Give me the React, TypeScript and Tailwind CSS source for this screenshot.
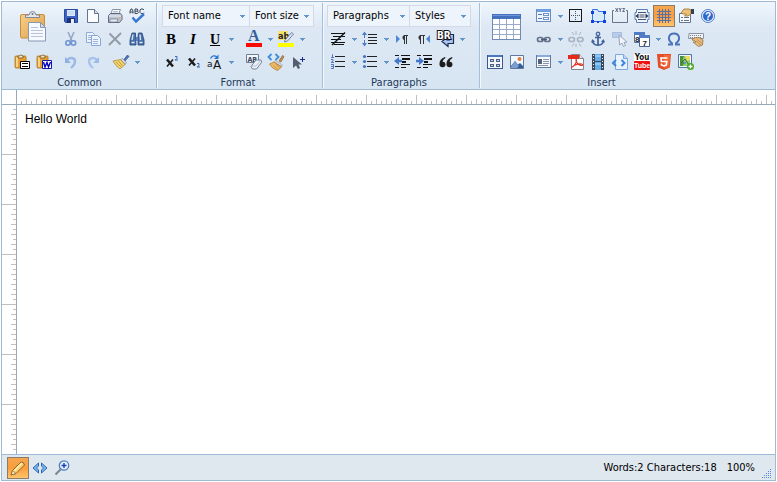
import React from "react";

type Kids = { children: React.ReactNode };

function Ico({ children, crisp }: Kids & { crisp?: boolean }) {
  return (
    <svg width="16" height="16" viewBox="0 0 16 16" fill="none" aria-hidden="true" className="overflow-visible" shapeRendering={crisp ? "crispEdges" : "auto"}>
      {children}
    </svg>
  );
}

function Caret() {
  return (
    <svg width="5" height="3" viewBox="0 0 5 3" shapeRendering="crispEdges" aria-hidden="true">
      <path d="M0 0h5v1H0zM1 1h3v1H1zM2 2h1v1H2z" fill="#6596cb" />
    </svg>
  );
}

function Btn({ label, children, active }: Kids & { label: string; active?: boolean }) {
  return (
    <button
      type="button"
      title={label}
      aria-label={label}
      aria-pressed={active}
      className={
        active
          ? "flex h-[22px] w-[22px] items-center justify-center border border-[#8b7d6b] bg-linear-to-b from-[#f5a64e] via-[#fb9c3c] to-[#ffc66b]"
          : "flex h-[22px] w-[22px] items-center justify-center"
      }
    >
      {children}
    </button>
  );
}

function More({ label }: { label: string }) {
  return (
    <button type="button" aria-label={label + " options"} className="flex h-[22px] w-2.5 items-center justify-center">
      <Caret />
    </button>
  );
}

function Row({ children }: Kids) {
  return <div className="flex h-[23px] items-start">{children}</div>;
}

function Group({ label, className, children }: Kids & { label: string; className: string }) {
  return (
    <section aria-label={label} className={"flex flex-col pt-[3px] " + className}>
      {children}
      <h2 className="pt-[3px] text-center text-[11px] leading-3 text-[#1e395b]">{label}</h2>
    </section>
  );
}

function Divider() {
  return <div className="my-px w-px bg-[#a5bfda] shadow-[1px_0_0_#f3f8fd]" />;
}

function Pick({ label, className }: { label: string; className: string }) {
  return (
    <div className={"relative h-[22px] " + className}>
      <select
        aria-label={label}
        className="h-full w-full appearance-none border border-[#d5d9e6] bg-[#edf4fc] pl-[5px] text-[11px] text-black outline-none"
      >
        <option>{label}</option>
      </select>
      <span className="pointer-events-none absolute inset-y-0 right-[5px] flex items-center">
        <Caret />
      </span>
    </div>
  );
}

/* ---------- Common ---------- */

const PasteLarge = () => (
  <svg width="28" height="32" viewBox="0 0 28 32" aria-hidden="true">
    <defs>
      <linearGradient id="board" x1="0" y1="0" x2="1" y2="1">
        <stop offset="0" stopColor="#f6cf88" />
        <stop offset="1" stopColor="#dfa04a" />
      </linearGradient>
    </defs>
    <rect x="1.5" y="3.5" width="24" height="23.500" rx="1.500" fill="url(#board)" stroke="#c98f3f" />
    <path d="M6.500 6.500v-2.500h3.500q.5-3.500 3.500-3.500t3.500 3.500h3.500v2.500z" fill="#e4e8ee" stroke="#7d8796" />
    <circle cx="13.500" cy="3" r="1" fill="#68717e" />
    <path d="M9.500 11.500h12l5 5v13.500h-17z" fill="#f6f9ff" stroke="#8996b5" />
    <path d="M21.500 11.500v5h5z" fill="#cbd8ee" stroke="#8996b5" />
    <path d="M12 16.500h7M12 19.500h12M12 22.500h12M12 25.500h12" stroke="#b9c4d8" />
  </svg>
);

const Board = () => (
  <>
    <rect x="1" y="2" width="11" height="12" rx="1" fill="#e7a036" stroke="#a86f1d" strokeWidth=".8" />
    <path d="M2 3h2v10H2z" fill="#f9d287" />
    <path d="M4 4V2h1.500Q6.500 0 8 1.500L9 2v2z" fill="#f3e6c4" stroke="#73511d" strokeWidth=".8" />
  </>
);
const PastePlain = () => (
  <Ico>
    <Board />
    <path d="M6.500 7.500h9v7h-9z" fill="#fff" stroke="#000" />
    <path d="M8 9.500h6M8 12.500h6" stroke="#000" />
  </Ico>
);
const PasteWord = () => (
  <Ico>
    <Board />
    <path d="M6.500 6.500h9v8h-9z" fill="#fff" stroke="#1717a8" />
    <path d="M7.500 8l1.500 5 2-4.500 1.500 4.500 2-5" stroke="#0000b8" strokeWidth="1.400" />
  </Ico>
);
const Save = () => (
  <Ico>
    <path d="M1.500 1.500h13v13h-12l-1-1z" fill="#3d62c4" stroke="#274a9e" />
    <path d="M4 2h8v6H4z" fill="#dce8fb" />
    <path d="M5 4h6M5 6h6" stroke="#a9c3ee" strokeWidth=".7" />
    <path d="M4 10h8v5H4z" fill="#1f316f" />
    <path d="M8 11h3v4H8z" fill="#e7eefb" />
  </Ico>
);
const NewDoc = () => (
  <Ico>
    <path d="M2.500 1.500h7l4 4v9h-11z" fill="#fbfdff" stroke="#66758f" />
    <path d="M9.500 1.500v4h4" fill="#d5e1f2" stroke="#66758f" />
  </Ico>
);
const Print = () => (
  <Ico>
    <path d="M5.500 1.500h8l-2.500 6H3z" fill="#fff" stroke="#8490a3" />
    <path d="M6 3.500h5M5.500 5h5" stroke="#9aa7ba" strokeWidth=".7" />
    <path d="M1.500 7.500l2-2h10l1.500 2v4l-2.500 3h-11z" fill="#bdc5d3" stroke="#5f6b80" />
    <path d="M2 8h12" stroke="#eef2f8" />
    <path d="M3 11h8l-1 3H3z" fill="#e8edf5" stroke="#737e91" strokeWidth=".8" />
    <circle cx="12.500" cy="10" r=".8" fill="#e2a938" />
  </Ico>
);
const Spell = () => (
  <Ico>
    <path d="M1 5.500V3l1-2h1l1 2v2.500M1 4h3M6 1v4.500h2.500l.8-1-.8-1.500.5-1-.8-1zM6 3.200h2.500M15 2l-1-1h-2l-1 1v2.500l1 1h2l1-1" stroke="#3c4658" />
    <path d="M3.500 9.500l3.500 4 8-7.500" stroke="#3976d2" strokeWidth="2.400" />
  </Ico>
);
const Cut = () => (
  <Ico>
    <path d="M5 1l4 9M11 1L7 10" stroke="#93a6c5" strokeWidth="1.500" />
    <circle cx="5" cy="12" r="2.200" stroke="#6f93d3" strokeWidth="1.600" />
    <circle cx="10.500" cy="12" r="2.200" stroke="#6f93d3" strokeWidth="1.600" />
  </Ico>
);
const Copy = () => (
  <Ico>
    <path d="M1.500 1.500h6l2 2v8h-8z" fill="#edf4fd" stroke="#8ca9d8" />
    <path d="M3 4.500h4M3 6.500h4M3 8.500h4" stroke="#9bb5df" />
    <path d="M6.500 4.500h6l3 3v7h-9z" fill="#edf4fd" stroke="#86a5d8" />
    <path d="M8 8.500h5M8 10.500h5M8 12.500h5" stroke="#9bb5df" />
  </Ico>
);
const Delete = () => (
  <Ico>
    <path d="M2.500 2.500l11 11M14 2L2 14" stroke="#9199a5" strokeWidth="1.800" />
  </Ico>
);
const Find = () => (
  <Ico>
    <path d="M3 2h3.500v3L7 14H1V9zM9.500 2H13l2 7v5H9V5z" fill="#4a72ad" stroke="#25457a" strokeWidth=".8" />
    <path d="M7 6h2v4H7z" fill="#5c82ba" />
    <path d="M4 3.500L3 9M11 3.500l.5 5.500" stroke="#dbe8f8" strokeWidth="1.300" />
    <path d="M2.500 11.500h3M10.500 11.500h3" stroke="#dbe8f8" strokeWidth="1.600" />
  </Ico>
);
const Undo = () => (
  <Ico>
    <path d="M4 6.500C6 3 12 3 12 7.500c0 3-2 4.500-4 6.500" stroke="#9bb9e8" strokeWidth="2.400" />
    <path d="M2 3v6h6z" fill="#8fb0e4" />
  </Ico>
);
const Redo = () => (
  <Ico>
    <path d="M12 6.500C10 3 4 3 4 7.500c0 3 2 4.500 4 6.500" stroke="#a9c4ec" strokeWidth="2.400" />
    <path d="M14 3v6H8z" fill="#9dbbe8" />
  </Ico>
);
const Brush = () => (
  <Ico>
    <path d="M10.500 6L14.500 1l1.500 1.500-4.500 5z" fill="#4f74bd" stroke="#2f4f8d" strokeWidth=".7" />
    <path d="M7.500 5.500l2-1 4 4-1.500 2z" fill="#d0d5de" stroke="#7f8794" strokeWidth=".7" />
    <path d="M7.500 5.500l4.500 5L7 15Q2.500 12 0 7z" fill="#f1d36f" stroke="#a8812f" strokeWidth=".7" />
    <path d="M3 8l5 5M5.500 7l4 5" stroke="#bd9036" strokeWidth=".8" />
  </Ico>
);

/* ---------- Format ---------- */

const serif = "font-[Liberation_Serif,serif]";

const SuperScript = () => (
  <Ico>
    <path d="M4 5.500l6 7" stroke="#1c1c1c" strokeWidth="2.600" />
    <path d="M10 5.500l-6 7" stroke="#1c1c1c" strokeWidth="1.600" />
    <path d="M12 2.500h2v2l-2 1.500h3" stroke="#3d67b5" />
  </Ico>
);
const SubScript = () => (
  <Ico>
    <path d="M4 4.500l6 7" stroke="#1c1c1c" strokeWidth="2.600" />
    <path d="M10 4.500l-6 7" stroke="#1c1c1c" strokeWidth="1.600" />
    <path d="M12 9.500h2v2l-2 1.500h3" stroke="#3d67b5" />
  </Ico>
);
const ChangeCase = () => (
  <Ico>
    <path d="M3.500 4.500Q6 0 10 3" stroke="#2d77cc" strokeWidth="1.300" />
    <path d="M11.500.5v4.500H7z" fill="#2d77cc" />
    <text x="0" y="13" fontSize="9" fill="#111" className="font-[DejaVu_Sans,sans-serif]">a</text>
    <text x="6" y="15" fontSize="12" fill="#111" className="font-[DejaVu_Sans,sans-serif]">A</text>
  </Ico>
);
const FontColor = () => (
  <Ico>
    <text x="2" y="10" fontSize="16" fontWeight="700" fill="#335e9e" className={serif}>A</text>
    <path d="M0 12h16v4H0z" fill="#fa0a00" />
  </Ico>
);
const Highlight = () => (
  <Ico>
    <path d="M0 0h10v9H0z" fill="#f6e272" />
    <text x="0" y="8" fontSize="9" fontWeight="700" fill="#222" className="font-[DejaVu_Sans_Condensed,sans-serif]">ab</text>
    <path d="M7 9l6.500-7.500 2 1.500L9.500 10l-3 1z" fill="#d9e4f5" stroke="#5d6f8b" strokeWidth=".8" />
    <path d="M0 12h16v4H0z" fill="#ff0" />
  </Ico>
);
const RemoveFormat = () => (
  <Ico>
    <path d="M.5.5h12v8h-12z" fill="#f2f6fc" stroke="#707e94" />
    <text x="1.500" y="7.500" fontSize="7" fontWeight="700" fill="#31445f" className="font-[DejaVu_Sans_Condensed,sans-serif]">AB</text>
    <path d="M5 12.500l5-6.500h5l.5 2.500-5 6.500H6.500z" fill="#eef2f8" stroke="#75829a" />
    <path d="M5 12h5l5-6" stroke="#a6b1c4" strokeWidth=".8" />
  </Ico>
);
const CleanCode = () => (
  <svg width="18" height="18" viewBox="0 0 18 18" fill="none" aria-hidden="true">
    <path d="M4.500 1L1.500 4l3 3M8.500 1l3 3-3 3" stroke="#3e8ddb" strokeWidth="1.800" />
    <path d="M12 8l3.500-5.500 1.500 1L14 9z" fill="#c79254" stroke="#8a612f" strokeWidth=".7" />
    <path d="M8.500 7.500l7 4.500-1 1.500-7.500-4z" fill="#d7dbe2" stroke="#858c99" strokeWidth=".6" />
    <path d="M7 9l7.500 5-4 3.500Q5 15.500 2.500 11z" fill="#efbd6c" stroke="#b1772d" strokeWidth=".8" />
    <path d="M6 11.500l4.500 5M8.500 10.500l4 4.500" stroke="#bf8436" strokeWidth=".7" />
  </svg>
);
const SelectPlus = () => (
  <Ico>
    <path d="M3 3v11l3-2.500L8 15l2-1-1.500-3.500H12z" fill="#535f70" />
    <path d="M10 5.500h5M12.500 3v5" stroke="#1b2b8b" />
  </Ico>
);

/* ---------- Paragraphs ---------- */

const NoJustify = () => (
  <Ico>
    <path d="M1 2.500h14M3 5.500h12M1 8.500h10M1 11.500h14M4 13.500h10" stroke="#151515" strokeWidth="1.200" />
    <path d="M2 14L15 1.500" stroke="#151515" strokeWidth="1.500" />
  </Ico>
);
const LineHeight = () => (
  <Ico>
    <path d="M2.500 3v10" stroke="#4c7cc6" strokeDasharray="4 2" />
    <path d="M0 4h5L2.500.5zM0 12h5l-2.500 3.500z" fill="#4c7cc6" />
    <path d="M6 3.500h9M6 6.500h9M6 9.500h9M6 12.500h9" stroke="#222" />
  </Ico>
);
const Pilcrow = ({ flip }: { flip?: boolean }) => (
  <Ico>
    <path d={flip ? "M14 4v8l-4-4z" : "M2 4v8l4-4z"} fill="#4d87d6" />
    <path d={flip ? "M4.500 5v8M7.500 5v8M9 4.500H4" : "M10.500 5v8M12.500 5v8M14 4.500h-4"} stroke="#333" />
    <path d={flip ? "M5 4a2.500 2.500 0 000 5z" : "M11 4a2.500 2.500 0 000 5z"} fill="#333" />
  </Ico>
);
const LineBreak = () => (
  <svg width="18" height="18" viewBox="0 0 18 18" fill="none" aria-hidden="true" className="overflow-visible">
    <path d="M12.500 4.500h4v9h-5.500v3L5 11.500l5-4v2.500h2.500z" fill="#a9c7f0" stroke="#1e2c54" strokeWidth="1.200" />
    <text x="0" y="9" fontSize="10" fontWeight="700" fill="#fff" stroke="#14141c" strokeWidth="2" paintOrder="stroke" className="font-[DejaVu_Sans_Condensed,sans-serif]">BR</text>
  </svg>
);
const Numbered = () => (
  <Ico>
    <path d="M2 .5h.5v3M1 3.500h3M1 5.500h2v1.500l-2 1.500h3M1 10.500h2.500v4H1M1 12.500h2" stroke="#5479bb" />
    <path d="M5 2.500h10M5 7.500h10M5 12.500h10" stroke="#222" />
  </Ico>
);
const Bullets = () => (
  <Ico>
    <circle cx="2.500" cy="2.500" r="1.600" fill="#4674bd" />
    <circle cx="2.500" cy="7.500" r="1.600" fill="#4674bd" />
    <circle cx="2.500" cy="12.500" r="1.600" fill="#4674bd" />
    <path d="M5 2.500h10M5 7.500h10M5 12.500h10" stroke="#222" />
  </Ico>
);
const Indent = ({ more }: { more?: boolean }) => (
  <Ico>
    <path d="M1 1.500h4M7 1.500h9M7 10.500h9M1 13.500h4M7 13.500h5" stroke="#151515" />
    <path d="M8 5h8M8 8h4" stroke="#151515" strokeWidth="1.800" />
    <path d={more ? "M3 3l5 4-5 4V8.200H0V5.800h3z" : "M5 3L0 7l5 4V8.200h3V5.800H5z"} fill="#4478ca" />
  </Ico>
);
const Quote = () => (
  <Ico>
    <path d="M7 3Q1 5 1.500 10.500a3 3 0 106-.5Q7 7.500 4.500 7.800 5 5 7.500 4zM14 3Q8 5 8.500 10.500a3 3 0 106-.5Q14 7.500 11.500 7.800 12 5 14.500 4z" fill="#1d1d1d" />
  </Ico>
);

/* ---------- Insert ---------- */

const TableLarge = () => (
  <svg width="29" height="26" viewBox="0 0 29 26" shapeRendering="crispEdges" aria-hidden="true">
    <path d="M.5.5h28v25H.5z" fill="#fff" stroke="#7189b5" />
    <path d="M0 0h29v5H0z" fill="#4470bd" />
    <path d="M1 1h27v1H1z" fill="#6d95d8" />
    <path d="M1 10.500h27M1 15.500h27M1 20.500h27M7.500 5v20M14.500 5v20M21.500 5v20" stroke="#9aabc8" />
  </svg>
);
const Templates = () => (
  <Ico crisp>
    <path d="M.5 1.500h15v13H.5z" fill="#f3f7fd" stroke="#3b598f" />
    <path d="M1 1h14v2H1z" fill="#4b78bd" />
    <path d="M3 5h4v3H3zM9 5h4v3H9zM3 10h4v3H3zM9 10h4v3H9z" fill="#4c6184" />
    <path d="M4 6h2v1H4zM10 6h2v1h-2zM4 11h2v1H4zM10 11h2v1h-2z" fill="#bcd3f2" />
  </Ico>
);
const Picture = () => (
  <Ico>
    <path d="M1.500 1.500h13v13h-13z" fill="#f3f8ff" stroke="#61799f" />
    <path d="M2 12l4-5 3 3.500 2-1.500 3 3v2H2z" fill="#355d96" />
    <path d="M6 7l4 5-2 2H2v-1z" fill="#7ba0cf" />
    <circle cx="10.500" cy="5" r="2" fill="#e47b3d" />
  </Ico>
);
const Form = () => (
  <Ico crisp>
    <path d="M.5 1.500h14v12H.5z" fill="#eef5fe" stroke="#6c8cbd" />
    <path d="M1 1h13v3H1z" fill="#71a0df" />
    <path d="M2 6h4v1H2zM2 10h4v1H2z" fill="#587bae" />
    <path d="M7.500 5.500h5v2h-5zM7.500 9.500h5v2h-5z" fill="#fff" stroke="#6c94cf" />
  </Ico>
);
const BoxDotted = () => (
  <Ico crisp>
    <path d="M1.500 1.500h12v12h-12z" stroke="#15181d" />
    <path d="M7.500 3v9M3 7.500h9" stroke="#4b535f" strokeDasharray="1 1" />
  </Ico>
);
const Layer = () => (
  <Ico>
    <path d="M2.500 4.500V1.500h5l1 2h6v10h-12z" fill="#d7e9fd" stroke="#3972e3" />
    <path d="M1 3h3v3H1zM13 3h3v3h-3zM1 12h3v3H1zM13 12h3v3h-3zM7 13h2v2H7z" fill="#123fe2" />
  </Ico>
);
const FieldSet = () => (
  <Ico>
    <path d="M2 2.500H.5v12h15v-12H14" stroke="#677386" />
    <path d="M3.500 0l2.500 4M6 0L3.500 4M7 0l1.200 2 1.200-2M8.200 2v2M10.500.5h2.200l-2 3h2.200" stroke="#536176" strokeWidth=".9" />
  </Ico>
);
const PageBreak = () => (
  <Ico>
    <path d="M2.500 1.500h11v3h1.500v7h-1.500v3h-11v-3H1v-7h1.500z" fill="#eef4fc" stroke="#6080b5" />
    <path d="M4 4.500h8M4 11.500h8M5.500 7h5M5.500 9h5" stroke="#4a5569" />
    <path d="M4.500 5.500v5L1.500 8zM11.500 5.500v5l3-2.500z" fill="#243352" />
  </Ico>
);
const GridIcon = () => (
  <Ico crisp>
    <path d="M1 3.500h14M1 6.500h14M1 9.500h14M1 12.500h14M3.500 1v14M6.500 1v14M9.500 1v14M12.500 1v14" stroke="#5570a4" />
  </Ico>
);
const Properties = () => (
  <Ico>
    <path d="M1.500 5.500h11v9h-11z" fill="#f7f9fc" stroke="#657791" />
    <path d="M3 9.500h2M3 12.500h2M6 9.500h5M6 12.500h5" stroke="#66758c" />
    <path d="M3 5l3-4h5l2 1v4l-3 2H6.500l2-2H5z" fill="#edc078" stroke="#9c6e2e" strokeWidth=".8" />
    <path d="M13 1h3v5h-3z" fill="#334255" />
  </Ico>
);
const Help = () => (
  <Ico>
    <circle cx="8" cy="8" r="6.500" fill="#e6effc" stroke="#5581cb" />
    <circle cx="8" cy="8" r="5" fill="#2f68c8" />
    <text x="5" y="12" fontSize="10" fontWeight="700" fill="#fff" className="font-[Liberation_Sans,sans-serif]">?</text>
  </Ico>
);
const Chain = ({ muted }: { muted?: boolean }) => (
  <Ico>
    <rect x={muted ? 1 : 1.5} y="6.500" width="5.500" height="4" rx="2" stroke={muted ? "#a9b3c3" : "#667389"} strokeWidth="1.700" />
    <rect x={muted ? 9.5 : 8.5} y="6.500" width="5.500" height="4" rx="2" stroke={muted ? "#a9b3c3" : "#667389"} strokeWidth="1.700" />
    {muted ? (
      <path d="M4 1l2 3M8 0v4M13 1l-2 3M4 15.500l2-3M8 16v-3M13 15.500l-2-3" stroke="#aab2bf" />
    ) : (
      <path d="M5 8.500h6" stroke="#4f5e77" strokeWidth="1.500" />
    )}
  </Ico>
);
const Anchor = () => (
  <Ico>
    <circle cx="8" cy="3" r="1.700" stroke="#4c6fa5" strokeWidth="1.400" />
    <path d="M8 4.500v10M5 6.500h6M2.500 9.500Q3 14 8 14.200 13 14 13.500 9.500" stroke="#3e6298" strokeWidth="1.700" />
    <path d="M1 11.500L2.500 8 5 11zM15 11.500L13.500 8 11 11z" fill="#3e6298" />
  </Ico>
);
const ButtonCursor = () => (
  <Ico>
    <path d="M.5 1.500h9v5h-9z" fill="#b9cdeb" stroke="#a7bddf" />
    <path d="M7 4l.5 10 2.500-2 1.500 3.500 2-1-1.500-3 3-.5z" fill="#f1f5fb" stroke="#98a6bb" />
  </Ico>
);
const DateTime = () => (
  <Ico>
    <path d="M.5 1.500h10v10H.5z" fill="#fff" stroke="#5373b0" />
    <path d="M0 1h11v3H0z" fill="#4f7cc4" />
    <path d="M5.500 4.500h10v11h-10z" fill="#fff" stroke="#4a6594" />
    <path d="M5 4h11v3H5z" fill="#527ec5" />
    <text x="1" y="11" fontSize="8" fontWeight="700" fill="#222" className="font-[Liberation_Sans,sans-serif]">8</text>
    <text x="8.500" y="14.500" fontSize="8" fontWeight="700" fill="#222" className="font-[Liberation_Sans,sans-serif]">7</text>
  </Ico>
);
const Omega = () => (
  <Ico>
    <path d="M2 13.500h4v-1.300C1 8.500 2.500 2.500 8 2.500s7 6 2 9.700v1.300h4" stroke="#4c74bb" strokeWidth="2" />
  </Ico>
);
const Keyboard = () => (
  <Ico>
    <path d="M1 2.500h14.500v5H.5z" fill="#eef1f5" stroke="#8c94a1" />
    <path d="M2 4.500h12M2 6.500h12" stroke="#7b8490" strokeDasharray="1 1" />
    <path d="M4 9l2-2 5-.5 4 2.500-.5 5-4 1.500L5 11h3L6.500 9.500z" fill="#e9bd7d" stroke="#9d713a" strokeWidth=".8" />
    <path d="M8 10l5 4M9 8.500l5 3.500" stroke="#b3854b" strokeWidth=".8" />
  </Ico>
);
const Snippet = () => (
  <Ico crisp>
    <path d="M.5 1.500h14v12H.5z" fill="#f7faff" stroke="#62799f" />
    <path d="M1 1h13v2H1z" fill="#8babd9" />
    <path d="M2 5h4v5H2z" fill="#53637a" />
    <path d="M7 5.500h6M7 7.500h6M7 9.500h6M2 11.500h10" stroke="#8794a8" />
  </Ico>
);
const Pdf = () => (
  <Ico>
    <path d="M3.500.5h8l4 4v11h-12z" fill="#fbfbfc" stroke="#81848a" />
    <path d="M11.500.5v4h4" fill="#dfe3e9" stroke="#81848a" />
    <path d="M0 1h11v4H0z" fill="#e62918" />
    <path d="M3.500 13.500Q8 11 8.500 6.500C8.500 4 6.500 6.500 10 10q3 2 4.500 1.200.5-1.700-4-1.200-4.500.7-7 3.500" stroke="#e52a1d" strokeWidth="1.100" />
  </Ico>
);
const Film = () => (
  <Ico crisp>
    <path d="M2 0h12v16H2z" fill="#3c4759" />
    <path d="M5 0h6v7H5zM5 8h6v8H5z" fill="#64ade9" />
    <path d="M5 1h6v2H5zM5 9h6v2H5z" fill="#8cc8f5" />
    <path d="M3.500 1v15M12.500 1v15" stroke="#e9f1fa" strokeDasharray="1 2" />
  </Ico>
);
const CodeDoc = () => (
  <Ico>
    <path d="M3.500.5h8l4 4v11h-12z" fill="#e8f3ff" stroke="#7ca8de" />
    <path d="M11.500.5v4h4" fill="#bedafa" stroke="#7ca8de" />
    <path d="M4 6L1 9l3 3M9.500 6l3 3-3 3" stroke="#3987d7" strokeWidth="2" />
  </Ico>
);
const YouTube = () => (
  <Ico>
    <path d="M0 0h16v7H0z" fill="#fff" />
    <text x="8" y="6" textAnchor="middle" fontSize="8" fontWeight="700" fill="#111" className="font-[DejaVu_Sans_Condensed,sans-serif]">You</text>
    <rect y="7" width="16" height="9" rx="1" fill="#ef1212" />
    <text x="8" y="14" textAnchor="middle" fontSize="7" fontWeight="700" fill="#fff" className="font-[Liberation_Sans,sans-serif]">Tube</text>
  </Ico>
);
const Html5 = () => (
  <Ico>
    <path d="M1 0h14l-1.200 13.500L8 16l-5.800-2.500z" fill="#e44d26" />
    <path d="M8 1h6l-1 11.500L8 14.500z" fill="#f16a3a" />
    <path d="M11.500 4H5l.3 3.500h5.500l-.5 3.500L8 12l-2.500-1-.2-1.500" stroke="#fff" strokeWidth="1.600" />
  </Ico>
);
const MapAdd = () => (
  <Ico>
    <path d="M.5.5h13v13H.5z" fill="#8fd06b" stroke="#4f78a8" />
    <path d="M1.500 1.500h11v11h-11z" stroke="#f4f8fc" />
    <path d="M2 2h4l-1.500 4 2 3-2 3H2z" fill="#4f8f3c" />
    <path d="M7 2h5v4L9 7z" fill="#f1d86b" />
    <path d="M3 9l4-4 4 6" stroke="#376d36" />
    <path d="M6 8h2v2H6z" fill="#5b97dc" />
    <circle cx="12.500" cy="12.500" r="3.500" fill="#48a62a" />
    <path d="M10.500 12.500h4M12.500 10.500v4" stroke="#fff" strokeWidth="1.300" />
  </Ico>
);

/* ---------- Status bar ---------- */

const Pencil = () => (
  <Ico>
    <path d="M1 15l1.500-4.500L11 2q3 0 3.500 3L6 13.500z" fill="#f9cf6d" stroke="#8f6225" />
    <path d="M4 11l8-8" stroke="#fff3b7" strokeWidth="1.500" />
    <path d="M2.500 10.500l3.500 3L1 15z" fill="#f8e5c2" stroke="#8f6225" strokeWidth=".7" />
  </Ico>
);
const CodeView = () => (
  <Ico>
    <path d="M6.500 3L1 8l5.500 5v-3L4.500 8l2-2zM9.500 3L15 8l-5.500 5v-3l2-2-2-2z" fill="#7db8f0" stroke="#2a67b2" />
  </Ico>
);
const ZoomIn = () => (
  <Ico>
    <path d="M6.500 9.500L1.500 14.500" stroke="#7d8795" strokeWidth="2.200" />
    <circle cx="10" cy="5.500" r="4.700" fill="#e6f2ff" stroke="#4e7ebd" strokeWidth="1.300" />
    <path d="M7.500 5.500h5M10 3v5" stroke="#173dbb" strokeWidth="1.400" />
  </Ico>
);

function Ruler({ vertical }: { vertical?: boolean }) {
  const ticks = [4, 9, 14, 19, 24, 29, 34, 39, 44, 49];
  const id = vertical ? "ticks-y" : "ticks-x";
  return (
    <svg width="100%" height="100%" className="block" shapeRendering="crispEdges" aria-hidden="true">
      <defs>
        <pattern id={id} width={vertical ? 14 : 50} height={vertical ? 50 : 14} patternUnits="userSpaceOnUse">
          {ticks.map((t, i) => {
            const len = t === 49 ? (vertical ? 14 : 9) : i % 2 ? 5 : 3;
            return vertical ? (
              <rect key={t} x={14 - len} y={t} width={len} height="1" fill="#bfbfbf" />
            ) : (
              <rect key={t} x={t} y={14 - len} width="1" height={len} fill="#bfbfbf" />
            );
          })}
        </pattern>
      </defs>
      <rect width="100%" height="100%" fill={`url(#${id})`} />
    </svg>
  );
}

export default function App() {
  return (
    <div className="flex h-screen flex-col bg-white p-px font-[DejaVu_Sans_Condensed,Noto_Sans,sans-serif] text-[11px] text-black">
      <div className="flex min-h-0 flex-1 flex-col border border-[#9ebbd3]">
        <header className="flex flex-wrap border-b border-[#9ebbd3] bg-linear-to-b from-[#eff6fd] from-0% via-[#dde8f4] via-30% to-[#d7e5f2] to-100%">
          <Group label="Common" className="pr-2 pl-[9px]">
            <div className="flex gap-[5px]">
              <div>
                <button type="button" aria-label="Paste" title="Paste" className="flex h-[46px] w-11 items-center justify-center pb-[3px]">
                  <PasteLarge />
                </button>
                <Row>
                  <Btn label="Paste as text"><PastePlain /></Btn>
                  <Btn label="Paste from Word"><PasteWord /></Btn>
                </Row>
              </div>
              <div>
                <Row>
                  <Btn label="Save"><Save /></Btn>
                  <Btn label="New"><NewDoc /></Btn>
                  <Btn label="Print"><Print /></Btn>
                  <Btn label="Spell check"><Spell /></Btn>
                </Row>
                <Row>
                  <Btn label="Cut"><Cut /></Btn>
                  <Btn label="Copy"><Copy /></Btn>
                  <Btn label="Delete"><Delete /></Btn>
                  <Btn label="Find"><Find /></Btn>
                </Row>
                <Row>
                  <Btn label="Undo"><Undo /></Btn>
                  <Btn label="Redo"><Redo /></Btn>
                  <div className="ml-1.5 flex">
                    <Btn label="Format painter"><Brush /></Btn>
                    <More label="Format painter" />
                  </div>
                </Row>
              </div>
            </div>
          </Group>
          <Divider />
          <Group label="Format" className="pr-1.5 pl-[3px]">
            <div className="flex h-[23px] px-0.5">
              <Pick label="Font name" className="w-[88px]" />
              <Pick label="Font size" className="-ml-px w-[65px]" />
            </div>
            <Row>
              <Btn label="Bold"><span className={serif + " text-[15px] font-black"}>B</span></Btn>
              <Btn label="Italic"><span className={serif + " text-[15px] font-bold italic"}>I</span></Btn>
              <Btn label="Underline"><span className={serif + " text-[14px] font-bold underline"}>U</span></Btn>
              <More label="Underline" />
              <div className="ml-[7px] flex">
                <Btn label="Font color"><FontColor /></Btn>
                <More label="Font color" />
                <Btn label="Highlight"><Highlight /></Btn>
                <More label="Highlight" />
              </div>
            </Row>
            <Row>
              <Btn label="Superscript"><SuperScript /></Btn>
              <Btn label="Subscript"><SubScript /></Btn>
              <Btn label="Change case"><ChangeCase /></Btn>
              <More label="Change case" />
              <div className="ml-[7px] flex">
                <Btn label="Remove format"><RemoveFormat /></Btn>
                <Btn label="Clean code"><CleanCode /></Btn>
                <Btn label="Select all"><SelectPlus /></Btn>
              </div>
            </Row>
          </Group>
          <Divider />
          <Group label="Paragraphs" className="pr-2 pl-1">
            <div className="flex h-[23px]">
              <Pick label="Paragraphs" className="w-[83px]" />
              <Pick label="Styles" className="-ml-px w-[62px]" />
            </div>
            <Row>
              <Btn label="Justify none"><NoJustify /></Btn>
              <More label="Justify" />
              <Btn label="Line height"><LineHeight /></Btn>
              <More label="Line height" />
              <Btn label="Left to right"><Pilcrow /></Btn>
              <Btn label="Right to left"><Pilcrow flip /></Btn>
              <Btn label="Line break"><LineBreak /></Btn>
              <More label="Line break" />
            </Row>
            <Row>
              <Btn label="Numbered list"><Numbered /></Btn>
              <More label="Numbered list" />
              <Btn label="Bulleted list"><Bullets /></Btn>
              <More label="Bulleted list" />
              <Btn label="Outdent"><Indent /></Btn>
              <Btn label="Indent"><Indent more /></Btn>
              <Btn label="Block quote"><Quote /></Btn>
            </Row>
          </Group>
          <Divider />
          <Group label="Insert" className="px-1">
            <div className="flex gap-[5px]">
              <div>
                <button type="button" aria-label="Table" title="Table" className="flex h-[46px] w-11 items-center justify-center pb-[3px]">
                  <TableLarge />
                </button>
                <Row>
                  <Btn label="Templates"><Templates /></Btn>
                  <Btn label="Image"><Picture /></Btn>
                </Row>
              </div>
              <div>
                <Row>
                  <Btn label="Form"><Form /></Btn>
                  <More label="Form" />
                  <Btn label="Box"><BoxDotted /></Btn>
                  <Btn label="Layer"><Layer /></Btn>
                  <Btn label="Fieldset"><FieldSet /></Btn>
                  <Btn label="Page break"><PageBreak /></Btn>
                  <Btn label="Show grid" active><GridIcon /></Btn>
                  <Btn label="Properties"><Properties /></Btn>
                  <Btn label="Help"><Help /></Btn>
                </Row>
                <Row>
                  <Btn label="Link"><Chain /></Btn>
                  <More label="Link" />
                  <Btn label="Unlink"><Chain muted /></Btn>
                  <Btn label="Anchor"><Anchor /></Btn>
                  <Btn label="Image map"><ButtonCursor /></Btn>
                  <Btn label="Date"><DateTime /></Btn>
                  <More label="Date" />
                  <Btn label="Special character"><Omega /></Btn>
                  <Btn label="Virtual keyboard"><Keyboard /></Btn>
                </Row>
                <Row>
                  <Btn label="Snippet"><Snippet /></Btn>
                  <More label="Snippet" />
                  <Btn label="PDF"><Pdf /></Btn>
                  <Btn label="Media"><Film /></Btn>
                  <Btn label="Document"><CodeDoc /></Btn>
                  <Btn label="YouTube"><YouTube /></Btn>
                  <Btn label="HTML5"><Html5 /></Btn>
                  <Btn label="Map"><MapAdd /></Btn>
                </Row>
              </div>
            </div>
          </Group>
        </header>

        <main className="grid min-h-0 flex-1 grid-cols-[15px_1fr] grid-rows-[15px_1fr]">
          <div className="border-r border-b border-[#9aa9b8]" />
          <div className="border-b border-[#9aa9b8]"><Ruler /></div>
          <div className="min-h-0 overflow-hidden border-r border-[#9aa9b8]"><Ruler vertical /></div>
          <textarea
            aria-label="Document"
            defaultValue="Hello World"
            spellCheck={false}
            className="block h-full w-full resize-none bg-white px-2 py-[7px] font-[Liberation_Sans,Arial,sans-serif] text-xs leading-[14px] text-black outline-none"
          />
        </main>

        <footer className="flex h-[26px] items-center border-t border-[#9ebbd3] bg-[#dfe7ef] pr-[3px] pl-[5px]">
          <Btn label="Design view" active><Pencil /></Btn>
          <Btn label="Code view"><CodeView /></Btn>
          <Btn label="Zoom"><ZoomIn /></Btn>
          <div className="ml-auto flex gap-2.5 pt-0.5 pr-[7px]">
            <span>Words:2 Characters:18</span>
            <span>100%</span>
          </div>
          <svg width="10" height="10" viewBox="0 0 10 10" className="mt-3" shapeRendering="crispEdges" aria-hidden="true">
            <path d="M8 0h1v1H8zM6 2h1v1H6zM8 2h1v1H8zM4 4h1v1H4zM6 4h1v1H6zM8 4h1v1H8zM2 6h1v1H2zM4 6h1v1H4zM6 6h1v1H6zM8 6h1v1H8zM0 8h1v1H0zM2 8h1v1H2zM4 8h1v1H4zM6 8h1v1H6zM8 8h1v1H8z" fill="#5b86e6" />
          </svg>
        </footer>
      </div>
    </div>
  );
}
